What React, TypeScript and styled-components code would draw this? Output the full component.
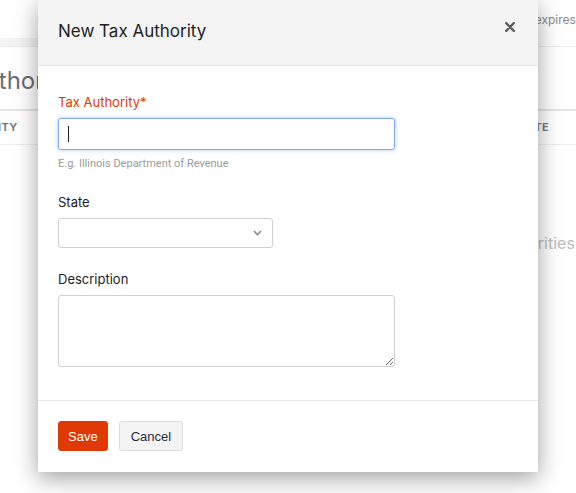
import styled, { createGlobalStyle } from 'styled-components'

const GlobalStyle = createGlobalStyle`
  html, body {
    margin: 0;
    padding: 0;
    background: #fff;
    font-family: Inter, 'Liberation Sans', sans-serif;
    color: #222;
  }
  * {
    box-sizing: border-box;
  }
`

const Page = styled.div`
  position: relative;
  width: 576px;
  height: 493px;
  overflow: hidden;
  background: #fff;
`

const TopBar = styled.div`
  height: 38px;
  display: flex;
  align-items: center;
  padding-left: 507px;
  font-size: 12px;
  color: #8a8a8a;
  white-space: nowrap;
`

const Band = styled.div`
  height: 9px;
  display: flex;
  border-bottom: 1px solid #ededed;
`

const BandFill = styled.div`
  width: 220px;
  background: #f3f3f3;
`

const PageTitle = styled.h1`
  margin: 0;
  padding: 19px 0 0;
  height: 62px;
  font-size: 24px;
  font-weight: 400;
  color: #6c6c6c;
  white-space: nowrap;
  text-indent: -79px;
`

const TableHead = styled.div`
  border-top: 1px solid #e6e6e6;
  border-bottom: 1px solid #ececec;
  box-shadow: inset 0 3px 0 -2px #e6e6e6;
  height: 36px;
  display: flex;
  align-items: center;
  justify-content: space-between;
  font-size: 11px;
  font-weight: 700;
  color: #7a7a7a;
  letter-spacing: 0.3px;
  text-transform: uppercase;
`

const FirstHead = styled.span`
  white-space: nowrap;
  text-indent: -51px;
  width: 52px;
  overflow: hidden;
`

const LastHead = styled.span`
  white-space: nowrap;
  padding-right: 27px;
`

const Empty = styled.div`
  padding: 88px 0 0 493px;
  font-size: 16px;
  color: #bdbdbd;
  white-space: nowrap;
`

const Modal = styled.div`
  position: absolute;
  top: 0;
  left: 38px;
  width: 500px;
  background: #fff;
  box-shadow: 0 6px 22px rgba(0, 0, 0, 0.38);
`

const ModalHeader = styled.header`
  height: 66px;
  background: #f4f4f4;
  border-bottom: 1px solid #e6e6e6;
  display: flex;
  justify-content: space-between;
  align-items: flex-start;
  padding: 20px 23px 0 20px;
`

const ModalTitle = styled.h2`
  margin: 0;
  font-size: 17px;
  line-height: 22px;
  font-weight: 400;
  color: #222;
`

const CloseButton = styled.button`
  border: 0;
  background: none;
  padding: 2px 0 0;
  cursor: pointer;
  display: flex;
`

const Body = styled.div`
  padding: 27px 20px 33px;
`

const Field = styled.div<{ $gap?: number }>`
  display: flex;
  flex-direction: column;
  align-items: flex-start;
  margin-top: ${p => p.$gap ?? 0}px;
`

const Label = styled.label<{ $required?: boolean }>`
  font-size: 13px;
  line-height: 18px;
  color: ${p => (p.$required ? '#df3a06' : '#222')};
  margin-bottom: 7px;
`

const InputWrap = styled.div`
  position: relative;
  width: 337px;
`

const TextInput = styled.input`
  display: block;
  width: 100%;
  height: 32px;
  border: 1px solid #7fa8ef;
  border-radius: 3px;
  box-shadow: 0 0 4px rgba(66, 133, 244, 0.45);
  outline: none;
  caret-color: transparent;
  font-family: inherit;
  font-size: 13px;
  padding: 0 9px;
`

const Caret = styled.span`
  position: absolute;
  left: 10px;
  top: 8px;
  width: 1px;
  height: 16px;
  background: #222;
`

const Help = styled.div`
  margin-top: 7px;
  font-family: Roboto, 'Liberation Sans', sans-serif;
  font-size: 11px;
  line-height: 13px;
  color: #9a9a9a;
`

const SelectBox = styled.div`
  width: 215px;
  height: 30px;
  border: 1px solid #cfcfd8;
  border-radius: 3px;
  display: flex;
  align-items: center;
  justify-content: flex-end;
  padding-right: 10px;
`

const TextArea = styled.textarea`
  display: block;
  width: 337px;
  height: 72px;
  border: 1px solid #cfcfd8;
  border-radius: 3px;
  font-family: inherit;
  font-size: 13px;
  outline: none;
`

const Footer = styled.footer`
  border-top: 1px solid #e6e6e6;
  padding: 20px 20px 21px;
  display: flex;
  gap: 11px;
`

const Button = styled.button<{ $primary?: boolean }>`
  height: 30px;
  padding: ${p => (p.$primary ? '0 9px' : '0 11px')};
  border-radius: 3px;
  border: 1px solid ${p => (p.$primary ? '#df3a06' : '#dcdcdc')};
  background: ${p => (p.$primary ? '#df3a06' : '#f4f4f4')};
  color: ${p => (p.$primary ? '#fff' : '#2a2a3a')};
  font-family: 'Liberation Sans', Arial, sans-serif;
  font-size: 13px;
  cursor: pointer;
`

function CloseIcon() {
  return (
    <svg width='10' height='10' viewBox='0 0 10 10'>
      <path d='M1.2 1.2 8.8 8.8M8.8 1.2 1.2 8.8' stroke='#5f5f5f' strokeWidth='2.4' strokeLinecap='round' />
    </svg>
  )
}

function Chevron() {
  return (
    <svg width='9' height='6' viewBox='0 0 9 6'>
      <path d='M1 1l3.5 3.5L8 1' stroke='#8a8a8a' strokeWidth='1.6' fill='none' />
    </svg>
  )
}

export default function App() {
  return (
    <Page>
      <GlobalStyle />
      <TopBar>Trial expires in 14 days</TopBar>
      <Band>
        <BandFill />
      </Band>
      <PageTitle>Tax Authorities</PageTitle>
      <TableHead>
        <FirstHead>Authority</FirstHead>
        <LastHead>Rate</LastHead>
      </TableHead>
      <Empty>Authorities</Empty>

      <Modal>
        <ModalHeader>
          <ModalTitle>New Tax Authority</ModalTitle>
          <CloseButton aria-label='Close'>
            <CloseIcon />
          </CloseButton>
        </ModalHeader>
        <Body>
          <Field>
            <Label $required>Tax Authority*</Label>
            <InputWrap>
              <TextInput />
              <Caret />
            </InputWrap>
            <Help>E.g. Illinois Department of Revenue</Help>
          </Field>
          <Field $gap={23}>
            <Label>State</Label>
            <SelectBox>
              <Chevron />
            </SelectBox>
          </Field>
          <Field $gap={22}>
            <Label>Description</Label>
            <TextArea />
          </Field>
        </Body>
        <Footer>
          <Button $primary>Save</Button>
          <Button>Cancel</Button>
        </Footer>
      </Modal>
    </Page>
  )
}
